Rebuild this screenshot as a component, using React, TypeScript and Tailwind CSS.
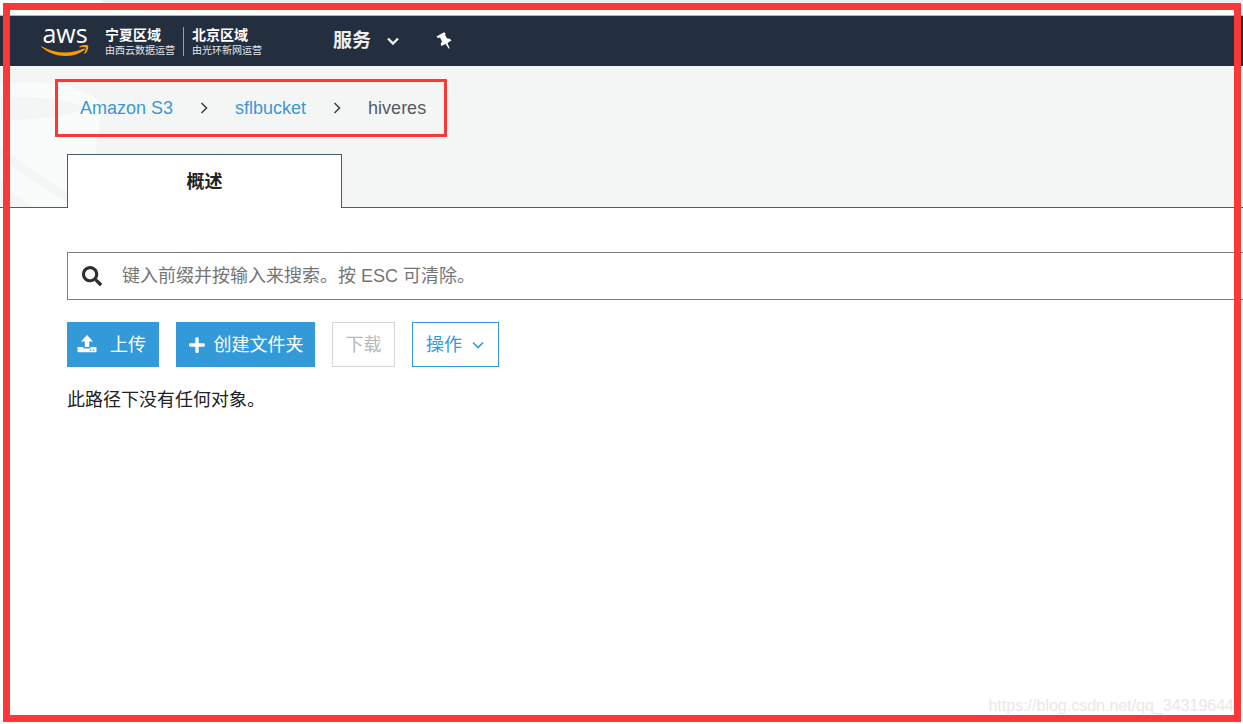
import React from "react";
import { FaPlus, FaSearch } from "react-icons/fa";

function AwsLogo() {
  return (
    <a href="#" aria-label="aws" className="flex h-8 w-12 flex-col items-center text-white">
      <span className="h-5 font-['Open_Sans',sans-serif] text-[25px] leading-4 font-medium">aws</span>
      <svg viewBox="0 0 48 12" className="h-3 w-12 shrink-0" aria-hidden="true">
        <path d="M0.5 1.2C14 9 30 9.4 42.6 3.6c1-.4 1.8.6.9 1.3C31 14 13 13 .4 2.1c-.5-.6-.3-1.1.1-.9z" fill="#ff9900" />
        <path d="M38.5 1.6c3-1.9 8-1.8 8.600-1 .6.8-.3 6-2.900 8.200-.6.4-1 .1-.8-.5.6-1.6 1.800-4.900 1.200-5.700s-4.100-.4-5.700-.2c-.6 0-.8-.4-.4-.8z" fill="#ff9900" />
      </svg>
    </a>
  );
}

function Region({ name, operator }: { name: string; operator: string }) {
  return (
    <div className="whitespace-nowrap">
      <div className="text-sm leading-5 font-bold text-white">{name}</div>
      <div className="text-[10px] leading-3 text-gray-200">{operator}</div>
    </div>
  );
}

function PinIcon() {
  return (
    <svg viewBox="0 0 16 18" className="h-[18px] w-4" fill="#fff" aria-hidden="true">
      <path d="M.8 4.200 7.600.500Q9 .200 9.400 1.200T8.900 2.800L11.200 6.600Q14.400 6.200 15.400 8.500L11.400 10.900 13.700 16.300 12.900 16.700 9.600 11.900 5.300 14Q3.900 11.600 6 9.400L4 5.600Q2.800 6.200 1.700 5.800T.8 4.200z" />
    </svg>
  );
}

function Chevron({ className, thickness = 1.6 }: { className: string; thickness?: number }) {
  return (
    <svg viewBox="0 0 12 12" className={className} fill="none" stroke="currentColor" strokeWidth={thickness} aria-hidden="true">
      <path d="M1 3.500 6 8.500l5-5" />
    </svg>
  );
}

function UploadIcon() {
  return (
    <svg viewBox="0 0 20 20" className="h-5 w-5" fill="#fff" aria-hidden="true">
      <path d="M10 0 16 6.500h-3.800V12H7.800V6.500H4z" />
      <path fillRule="evenodd" d="M1 12h5.500v1.500h7V12H19q.5 0 .5.500v4q0 .8-.8.8H1.300q-.8 0-.8-.8v-4q0-.5.500-.5zM13 14.500v1.300h1.400v-1.300zm3 0v1.300h1.400v-1.300z" />
    </svg>
  );
}

function BucketArt() {
  return (
    <svg viewBox="0 0 110 142" className="absolute top-0 left-0 h-full w-[110px]" aria-hidden="true">
      <path d="M0 17C45 14 98 21 102 42L87 142H0z" fill="#fafcfb" />
      <path d="M0 31C40 30 78 35 84 42C78 49 40 55 0 54z" fill="#f4f6f5" />
      <path d="M0 80Q30 106 80 134V145Q30 116 0 92z" fill="#f4f6f5" />
      <path d="M0 115Q12 129 33 142H0z" fill="#f4f6f5" />
    </svg>
  );
}

export default function App() {
  return (
    <div className="relative flex min-h-screen flex-col overflow-hidden bg-white font-['Liberation_Sans','Noto_Sans_CJK_SC',sans-serif] text-lg text-[#222]">
      <div className="flex h-[15px] flex-col">
        <div className="ml-[102px] h-[9px] bg-[#efeff4]" />
      </div>

      <header className="flex h-[51px] items-center border-t border-[#aab7b8] bg-[#232f3e] pl-[41px]">
        <AwsLogo />
        <div className="ml-4 flex items-center">
          <Region name="宁夏区域" operator="由西云数据运营" />
          <div className="mx-2 h-[29px] w-px bg-gray-400" />
          <Region name="北京区域" operator="由光环新网运营" />
        </div>
        <button type="button" className="ml-[71px] flex items-center gap-4 font-bold text-[#eee]">
          <span className="text-[19px] leading-6">服务</span>
          <Chevron className="h-3 w-3" thickness={2.4} />
        </button>
        <button type="button" aria-label="固定" className="ml-[37px]">
          <PinIcon />
        </button>
      </header>

      <div className="relative h-[142px] border-b border-[#44606f] bg-[#f4f6f5]">
        <BucketArt />
        <div className="relative flex h-[142px] flex-col items-start justify-between pt-[13px]">
          <nav aria-label="路径" className="ml-[55px] flex h-[58px] items-center border-3 border-[#fc3737] pr-[18px] pl-[22px]">
            <a href="#" className="text-[#3c96d4]">Amazon S3</a>
            <Chevron className="mx-[25px] h-3 w-3 -rotate-90 text-[#444]" />
            <a href="#" className="text-[#3c96d4]">sflbucket</a>
            <Chevron className="mx-[25px] h-3 w-3 -rotate-90 text-[#444]" />
            <span className="text-[#545b64]">hiveres</span>
          </nav>
          <button type="button" className="ml-[67px] h-[54px] w-[275px] border border-b-0 border-[#44606f] bg-white font-bold">
            概述
          </button>
        </div>
      </div>

      <main className="flex flex-col pt-11 pl-[67px]">
        <label className="flex h-12 items-center border border-r-0 border-[#808080] pl-[14px]">
          <FaSearch className="h-5 w-5 shrink-0 text-[#2c2f30]" aria-hidden="true" />
          <input
            type="text"
            aria-label="搜索"
            placeholder="键入前缀并按输入来搜索。按 ESC 可清除。"
            className="ml-5 min-w-0 flex-1 outline-none placeholder:text-[#757575]"
          />
        </label>

        <div className="mt-[22px] flex h-[45px] gap-[17px] whitespace-nowrap">
          <button type="button" className="flex w-[92px] items-center gap-[13px] bg-[#339ad9] pl-[10px] text-white">
            <UploadIcon />
            上传
          </button>
          <button type="button" className="flex w-[139px] items-center justify-center gap-2 bg-[#339ad9] text-white">
            <FaPlus className="h-[18px] w-[18px]" aria-hidden="true" />
            创建文件夹
          </button>
          <button type="button" disabled className="w-[63px] border border-[#d5d5d5] text-[#b8b8b8]">
            下载
          </button>
          <button type="button" className="flex w-[87px] items-center gap-[10px] border border-[#339ad9] pl-[13px] text-[#339ad9]">
            操作
            <Chevron className="h-3 w-3" />
          </button>
        </div>

        <p className="mt-[19px] leading-7">此路径下没有任何对象。</p>
      </main>

      <div className="absolute right-[9px] bottom-[8px] font-['Liberation_Sans',sans-serif] text-base leading-5 text-[#e8e8e8]">
        https://blog.csdn.net/qq_34319644
      </div>
      <div className="pointer-events-none absolute top-[3px] right-[2px] bottom-[2px] left-[3px] border-7 border-[#fc3737]" />
    </div>
  );
}
